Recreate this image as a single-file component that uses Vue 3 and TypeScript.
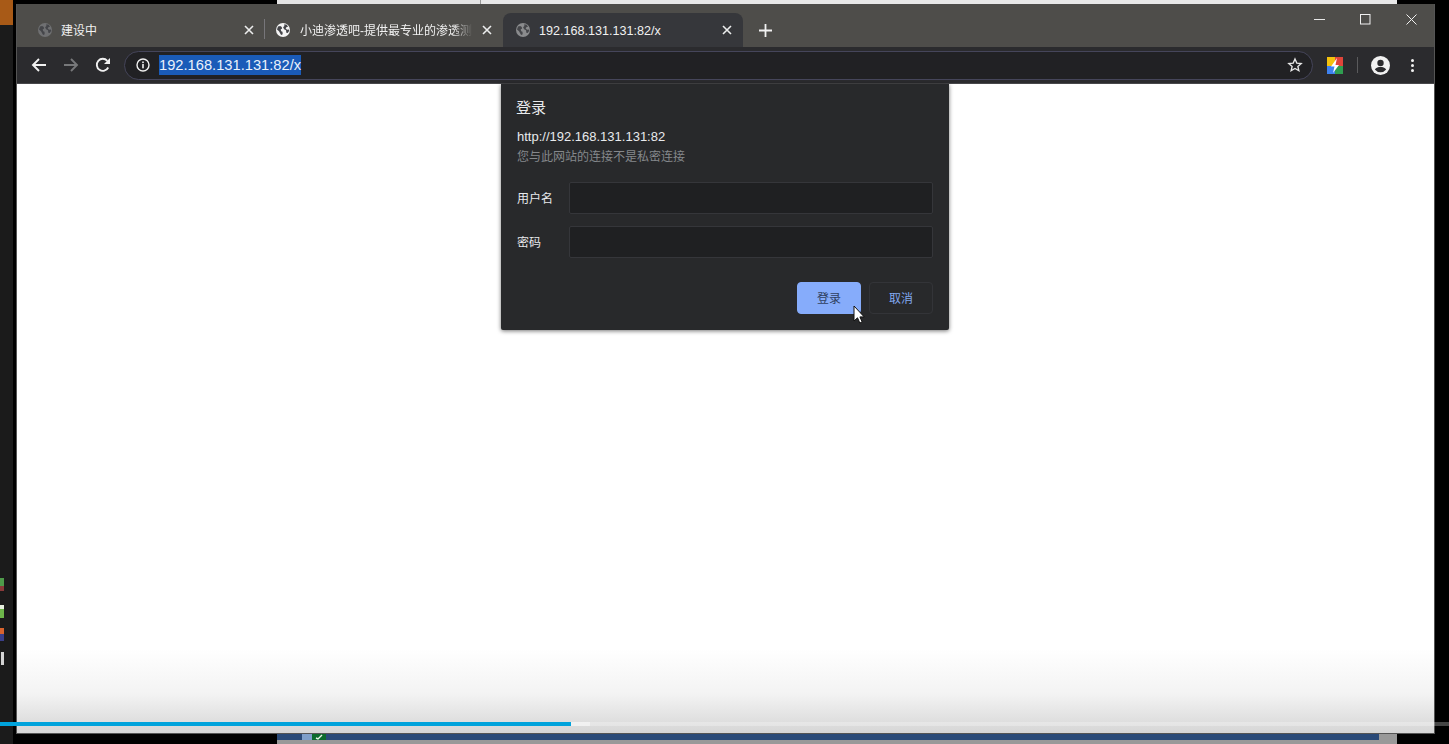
<template>
  <div class="desktop">
    <div class="bg-top"></div>
    <div class="bg-orange"></div>
    <div class="bg-left"></div>
    <div class="bg-bottom">
      <svg class="task-icon" width="24" height="6" viewBox="0 0 24 6"><rect width="14" height="6" fill="#7f9fc9" /><rect x="10" width="14" height="6" fill="#0c6b2c" /><path d="M14 4l2 1 4-4" stroke="#e8f5e8" stroke-width="1.4" fill="none" /></svg>
    </div>
    <div v-for="(d, i) in dockIcons" :key="i" class="dock-icon" :style="{ top: d.top + 'px', background: d.color }"></div>

    <div class="browser">
      <div class="tabstrip">
        <div v-for="tab in tabs" :key="tab.title" class="tab" :class="{ active: tab.active, sep: tab.sep }">
          <svg class="globe" :style="{ color: tab.globe }" width="14" height="14" viewBox="0 0 14 14">
            <circle cx="7" cy="7" r="7" fill="currentColor" />
            <path d="M2 3.5l2.2-.6 1.6 1.2.2 1.6-1.3.6.5 1.9 1.3.5.2 2.6-1.6.6L3 8.300 1 6.500zM8.200 1.300l2.600.5 1.200 1.900-1.700.5-.6 1.400 1.400 1.200 1.800-.3.400 1.300-1.600 2.300-1.400-.3-.3-2.600-1.900-1-1-1.900 1.300-1.300z" fill="#45464a" />
          </svg>
          <span class="tab-title">{{ tab.title }}</span>
          <svg class="tab-close" width="10" height="10" viewBox="0 0 10 10"><path d="M1 1l8 8M9 1l-8 8" stroke="#eceded" stroke-width="1.600" /></svg>
        </div>
        <svg class="new-tab" width="13" height="13" viewBox="0 0 13 13"><path d="M6.500 0v13M0 6.500h13" stroke="#f1f1f1" stroke-width="1.800" /></svg>
        <div class="win-controls">
          <svg width="11" height="11" viewBox="0 0 11 11"><path d="M0 5.500h11" stroke="#e8e8e8" stroke-width="1" /></svg>
          <svg width="11" height="11" viewBox="0 0 11 11"><rect x=".5" y=".5" width="9.500" height="9.500" fill="none" stroke="#f0f0f0" stroke-width="1" /></svg>
          <svg width="11" height="11" viewBox="0 0 11 11"><path d="M.5.500l10 10M10.500.500l-10 10" stroke="#f0f0f0" stroke-width="1" /></svg>
        </div>
      </div>

      <div class="toolbar">
        <svg class="nav" width="16" height="16" viewBox="0 0 16 16"><path d="M15 8H2M8 2L2 8l6 6" fill="none" stroke="#f1f1f1" stroke-width="1.900" /></svg>
        <svg class="nav" width="16" height="16" viewBox="0 0 16 16"><path d="M1 8h13M8 2l6 6-6 6" fill="none" stroke="#77787a" stroke-width="1.900" /></svg>
        <svg class="nav" width="16" height="16" viewBox="0 0 16 16"><path d="M13.200 10.500A6 6 0 1 1 12.300 3.800" fill="none" stroke="#f1f1f1" stroke-width="1.900" /><path d="M15 1v6H9z" fill="#f1f1f1" /></svg>
        <div class="omnibox">
          <svg width="14" height="14" viewBox="0 0 14 14"><circle cx="7" cy="7" r="6" fill="none" stroke="#f1f1f1" stroke-width="1.400" /><rect x="6.200" y="6" width="1.600" height="4.300" fill="#f1f1f1" /><rect x="6.200" y="3.500" width="1.600" height="1.600" fill="#f1f1f1" /></svg>
          <span class="url">192.168.131.131:82/x</span>
          <svg class="star" width="16" height="16" viewBox="0 0 24 24"><path d="M12 3l2.700 6.100 6.600.6-5 4.400 1.500 6.500L12 17.200l-5.800 3.400 1.500-6.500-5-4.400 6.600-.6z" fill="none" stroke="#e8e8e8" stroke-width="2" /></svg>
        </div>
        <svg class="ext" width="16" height="17" viewBox="0 0 16 17">
          <rect width="8" height="9" fill="#f4c20d" />
          <rect x="8" width="8" height="9" fill="#e0453a" />
          <rect y="9" width="8" height="8" fill="#3e82f0" />
          <rect x="8" y="9" width="8" height="8" fill="#2f9e50" />
          <path d="M10 1L4 9.500h3.500L6 16l6-8H8.500z" fill="#fff" />
        </svg>
        <div class="tool-sep"></div>
        <svg class="avatar" width="19" height="19" viewBox="0 0 19 19"><circle cx="9.500" cy="9.500" r="9.500" fill="#f1f1f1" /><circle cx="9.500" cy="7" r="3.200" fill="#2b2b2e" /><path d="M3.800 13.600c1.400-2 3.600-2.600 5.700-2.600s4.300.6 5.700 2.600a7.300 7.300 0 0 1-11.400 0z" fill="#2b2b2e" /></svg>
        <div class="kebab"><i></i><i></i><i></i></div>
      </div>

      <div class="page"></div>
    </div>

    <div class="dialog">
      <div class="dialog-title">登录</div>
      <div class="dialog-origin">http://192.168.131.131:82</div>
      <div class="dialog-note">您与此网站的连接不是私密连接</div>
      <div class="fields">
        <label class="field"><span>用户名</span><input type="text" /></label>
        <label class="field"><span>密码</span><input type="password" /></label>
      </div>
      <div class="actions">
        <button class="btn primary">登录</button>
        <button class="btn">取消</button>
      </div>
    </div>

    <svg class="cursor" width="12" height="20" viewBox="0 0 12 20"><path d="M1 1v15l3.500-3.200 2.300 5.200 2.400-1-2.300-5.100h4.300z" fill="#fff" stroke="#111" stroke-width="1" /></svg>

    <div class="progress"><div class="played"></div><div class="buffered"></div></div>
  </div>
</template>

<script setup lang="ts">
interface Tab {
  title: string
  globe: string
  active?: boolean
  sep?: boolean
}

const tabs: Tab[] = [
  { title: '建设中', globe: '#6f7072', sep: true },
  { title: '小迪渗透吧-提供最专业的渗透测', globe: '#f4f4f4' },
  { title: '192.168.131.131:82/x', globe: '#8a8b8d', active: true },
]

// clipped icons of the desktop dock, left edge
const dockIcons = [
  { top: 578, color: 'linear-gradient(180deg, #4e9a4a 0 60%, #8a3a3a 60%)' },
  { top: 605, color: 'linear-gradient(180deg, #e8f0e0 0 30%, #6db54a 30%)' },
  { top: 628, color: 'linear-gradient(180deg, #d8632e 0 50%, #3a3f8a 50%)' },
  { top: 652, color: 'linear-gradient(90deg, #222 0 30%, #d4d4d4 30%)' },
]
</script>

<style>
html, body {
  margin: 0;
  background: #000;
}
</style>

<style scoped>
.desktop {
  position: relative;
  width: 1449px;
  height: 744px;
  overflow: hidden;
  background: #000;
  font-family: "Liberation Sans", "Noto Sans CJK SC", sans-serif;
}

.bg-top {
  position: absolute;
  left: 277px;
  top: 0;
  width: 1120px;
  height: 5px;
  background: linear-gradient(90deg, #e4e4e4 0, #e4e4e4 203px, #999 203px, #999 204px, #e8e8e8 204px);
}

.bg-orange {
  position: absolute;
  left: 0;
  top: 0;
  width: 13px;
  height: 25px;
  background: #a85a17;
}

.bg-left {
  position: absolute;
  left: 0;
  top: 25px;
  width: 13px;
  height: 719px;
  background: #1b1b1b;
}

.bg-bottom {
  position: absolute;
  left: 277px;
  top: 734px;
  width: 1120px;
  height: 10px;
  background: linear-gradient(90deg, transparent 0, transparent 1102px, #999 1102px), linear-gradient(180deg, #2a4a78 0, #2a4a78 6px, #999 6px);
}

.task-icon {
  position: absolute;
  left: 25px;
  top: 0;
}

.dock-icon {
  position: absolute;
  left: 0;
  width: 4px;
  height: 13px;
}

.browser {
  position: absolute;
  left: 16px;
  top: 4px;
  width: 1419px;
  height: 730px;
  box-sizing: border-box;
  display: flex;
  flex-direction: column;
  border: 1px solid #555;
  border-top: 0;
}

.tabstrip {
  height: 43px;
  flex: none;
  display: flex;
  align-items: flex-end;
  background: #4e4d4a;
  color: #f1f1f1;
  font-size: 13px;
}

.tab {
  position: relative;
  width: 238px;
  height: 34px;
  flex: none;
  display: flex;
  align-items: center;
  gap: 9px;
  box-sizing: border-box;
  padding: 0 11px;
  border-radius: 8px 8px 0 0;
}

.tab:first-child {
  width: 248px;
  padding-left: 21px;
}

.tab.sep::after {
  content: "";
  position: absolute;
  right: 0;
  top: 6px;
  height: 20px;
  width: 1px;
  background: #77767a;
}

.tab.active {
  width: 240px;
  padding: 0 11px 0 13px;
  background: #36373b;
}

.tab.active .tab-title {
  padding: 2px 0 0;
  font-size: 12.600px;
}

.globe {
  flex: none;
}

.tab-title {
  position: relative;
  flex: 1;
  min-width: 0;
  padding-bottom: 2px;
  white-space: nowrap;
  overflow: hidden;
  font-size: 12px;
}

/* long titles fade out before the close button */
.tab:nth-child(2) .tab-title {
  margin-left: 1px;
  -webkit-mask-image: linear-gradient(90deg, #000 88%, transparent 100%);
  mask-image: linear-gradient(90deg, #000 88%, transparent 100%);
}

.tab-close {
  flex: none;
}

.new-tab {
  margin: 0 0 10px 16px;
}

.win-controls {
  margin: 0 17px 0 auto;
  align-self: flex-start;
  padding-top: 10px;
  display: flex;
  gap: 35px;
}

.toolbar {
  height: 37px;
  flex: none;
  display: flex;
  align-items: center;
  box-sizing: border-box;
  background: #2b2b2e;
  border-bottom: 1px solid #47474a;
  padding-left: 14px;
}

.nav {
  flex: none;
  margin-right: 16px;
}

.omnibox {
  flex: none;
  width: 1189px;
  height: 29px;
  margin-left: -3px;
  box-sizing: border-box;
  display: flex;
  align-items: center;
  gap: 9px;
  padding: 0 9px 0 11px;
  background: #212124;
  border: 1px solid #45455a;
  border-radius: 15px;
  color: #f1f1f1;
}

.url {
  background: #1a5bb8;
  color: #eaf1fb;
  font-size: 14.700px;
  line-height: 20px;
}

.star {
  margin-left: auto;
}

.ext {
  flex: none;
  margin-left: 14px;
}

.tool-sep {
  width: 1px;
  height: 16px;
  margin-left: 14px;
  background: #5a5a5c;
}

.avatar {
  flex: none;
  margin-left: 13px;
}

.kebab {
  margin-left: 21px;
  display: flex;
  flex-direction: column;
  gap: 2px;
}

.kebab i {
  display: block;
  width: 3px;
  height: 3px;
  border-radius: 50%;
  background: #f1f1f1;
}

.page {
  flex: 1;
  background: linear-gradient(180deg, #fff 0, #fff 565px, #f3f3f3 610px, #d6d6d6 100%);
}

.dialog {
  position: absolute;
  left: 501px;
  top: 84px;
  width: 448px;
  height: 246px;
  box-sizing: border-box;
  padding: 13px 16px 16px 15px;
  display: flex;
  flex-direction: column;
  background: #28292b;
  box-shadow: 0 1px 4px rgba(0, 0, 0, 0.55);
  border-radius: 0 0 2px 2px;
  color: #e8eaed;
  font-size: 12px;
}

.dialog-title {
  font-size: 15px;
  line-height: 20px;
  font-family: "Noto Sans CJK SC", sans-serif;
}

.dialog-origin {
  margin: 11px 0 0 1px;
  font-size: 13px;
  line-height: 18px;
}

.dialog-note {
  margin: 1px 0 0 1px;
  line-height: 18px;
  color: #85888c;
  font-family: "Noto Sans CJK SC", sans-serif;
}

.fields {
  margin-top: 17px;
  display: flex;
  flex-direction: column;
  gap: 12px;
}

.field {
  display: flex;
  align-items: center;
  font-family: "Noto Sans CJK SC", sans-serif;
}

.field span {
  width: 53px;
  flex: none;
  padding: 0 0 2px 1px;
  box-sizing: border-box;
}

.field input {
  width: 364px;
  height: 32px;
  box-sizing: border-box;
  background: #1f2022;
  border: 1px solid #35363a;
  border-radius: 2px;
  outline: none;
}

.actions {
  margin-top: auto;
  display: flex;
  justify-content: flex-end;
  gap: 8px;
}

.btn {
  width: 64px;
  height: 32px;
  padding: 0 0 2px;
  background: transparent;
  border: 1px solid #333438;
  border-radius: 4px;
  color: #82a8ef;
  font-size: 12px;
  font-family: "Noto Sans CJK SC", sans-serif;
}

.btn.primary {
  background: #86acfb;
  border-color: #86acfb;
  color: #2f3f60;
}

.cursor {
  position: absolute;
  left: 853px;
  top: 305px;
}

.progress {
  position: absolute;
  left: 0;
  top: 722px;
  width: 100%;
  height: 4px;
  display: flex;
  background: rgba(255, 255, 255, 0.27);
}

.played {
  width: 571px;
  background: #00a3dc;
}

.buffered {
  width: 19px;
  background: rgba(255, 255, 255, 0.45);
}
</style>
